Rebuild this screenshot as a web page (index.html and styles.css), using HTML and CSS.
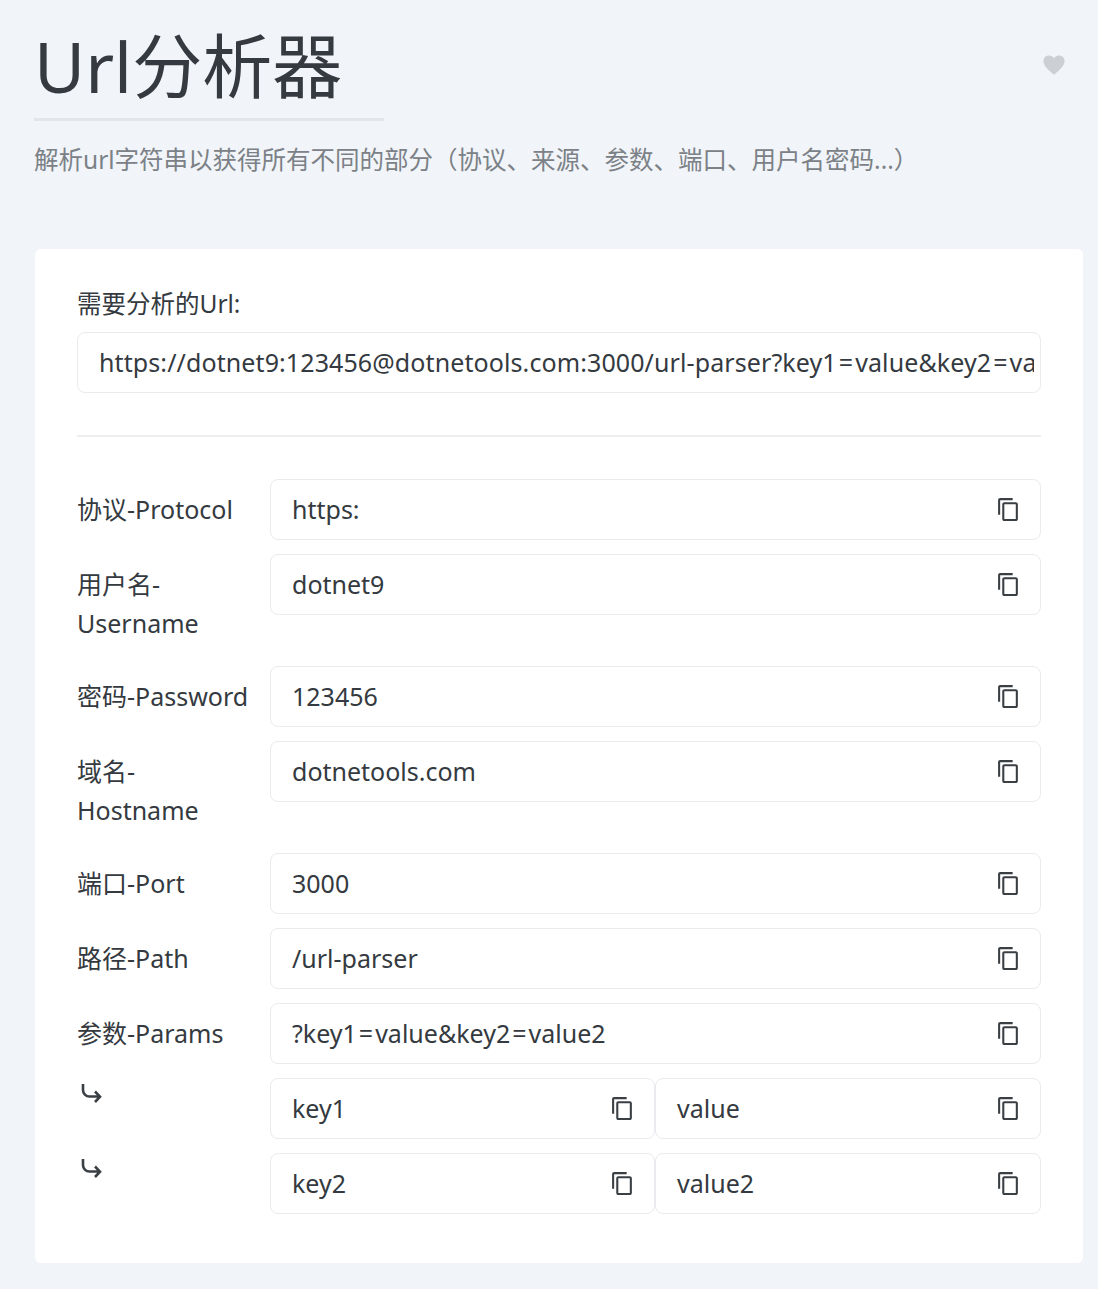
FILE: index.html
```html
<!DOCTYPE html>
<html lang="zh-CN">
<head>
    <meta charset="UTF-8">
    <title>Url分析器</title>
    <link rel="stylesheet" href="styles.css">
</head>
<body>
    <svg class="defs" width="0" height="0">
        <symbol id="copy" viewBox="0 0 24 24"><path d="M16 1H4c-1.1 0-2 .9-2 2v14h2V3h12V1zm3 4H8c-1.1 0-2 .9-2 2v14c0 1.1.9 2 2 2h11c1.1 0 2-.9 2-2V7c0-1.1-.9-2-2-2zm0 16H8V7h11v14z"/></symbol>
        <symbol id="arrow" viewBox="0 0 24 24"><path d="M3 3v6a6.500 6.500 0 0 0 6.500 6.500H20M15 10.500l5 5.200-5 5.300" fill="none" stroke="currentColor" stroke-width="2.600"/></symbol>
    </svg>
    <header class="head">
        <div class="head-top">
            <h1 class="title">Url分析器</h1>
            <svg class="heart" viewBox="0 0 24 24"><path d="M12 22.500C5 16.500.5 12.500.5 7.500.5 3.800 3.300 1.500 6.500 1.500c2.200 0 4.300 1.100 5.500 3 1.200-1.900 3.300-3 5.500-3 3.200 0 6 2.300 6 6 0 5-4.500 9-11.500 15z"/></svg>
        </div>
        <p class="desc">解析url字符串以获得所有不同的部分（协议、来源、参数、端口、用户名密码...）</p>
    </header>
    <main class="card">
        <div class="url-label">需要分析的Url:</div>
        <div class="url-box"><div class="url-text">https://dotnet9:123456@dotnetools.com:3000/url-parser?key1<span class="eq">=</span>value&amp;key2<span class="eq">=</span>value2</div></div>
        <hr class="line">
        <div class="row">
            <div class="name">协议-Protocol</div>
            <div class="fields"><div class="field"><span>https:</span><svg class="copy"><use href="#copy"/></svg></div></div>
        </div>
        <div class="row">
            <div class="name">用户名-Username</div>
            <div class="fields"><div class="field"><span>dotnet9</span><svg class="copy"><use href="#copy"/></svg></div></div>
        </div>
        <div class="row">
            <div class="name">密码-Password</div>
            <div class="fields"><div class="field"><span>123456</span><svg class="copy"><use href="#copy"/></svg></div></div>
        </div>
        <div class="row">
            <div class="name">域名-Hostname</div>
            <div class="fields"><div class="field"><span>dotnetools.com</span><svg class="copy"><use href="#copy"/></svg></div></div>
        </div>
        <div class="row">
            <div class="name">端口-Port</div>
            <div class="fields"><div class="field"><span>3000</span><svg class="copy"><use href="#copy"/></svg></div></div>
        </div>
        <div class="row">
            <div class="name">路径-Path</div>
            <div class="fields"><div class="field"><span>/url-parser</span><svg class="copy"><use href="#copy"/></svg></div></div>
        </div>
        <div class="row">
            <div class="name">参数-Params</div>
            <div class="fields"><div class="field"><span>?key1<span class="eq">=</span>value&amp;key2<span class="eq">=</span>value2</span><svg class="copy"><use href="#copy"/></svg></div></div>
        </div>
        <div class="row">
            <div class="name-icon"><svg class="arrow"><use href="#arrow"/></svg></div>
            <div class="fields">
                <div class="field key"><span>key1</span><svg class="copy"><use href="#copy"/></svg></div>
                <div class="field"><span>value</span><svg class="copy"><use href="#copy"/></svg></div>
            </div>
        </div>
        <div class="row">
            <div class="name-icon"><svg class="arrow"><use href="#arrow"/></svg></div>
            <div class="fields">
                <div class="field key"><span>key2</span><svg class="copy"><use href="#copy"/></svg></div>
                <div class="field"><span>value2</span><svg class="copy"><use href="#copy"/></svg></div>
            </div>
        </div>
    </main>
</body>
</html>
```

FILE: styles.css
```css
* {
    margin: 0;
    padding: 0;
    box-sizing: border-box;
}
body {
    font-family: "Noto Sans", "Noto Sans CJK SC", sans-serif;
    font-size: 25px;
    line-height: 39px;
    color: #343a40;
    background-color: #f1f4f9;
    padding: 0 15px 27px 34px;
}
.defs {
    display: block;
}
.head-top {
    display: flex;
    justify-content: space-between;
    align-items: flex-start;
}
.title {
    width: 350px;
    height: 121px;
    font-size: 70px;
    line-height: 100px;
    padding-top: 16px;
    font-weight: 400;
    border-bottom: 3px solid #e2e6ea;
}
.heart {
    width: 22px;
    height: 22px;
    margin: 54px 18px 0 0;
    fill: #ccd0d5;
}
.desc {
    margin-top: 19px;
    font-size: 24.5px;
    color: #7b8186;
}
.card {
    margin: 70px 0 0 1px;
    padding: 35px 42px 35px;
    background: #fff;
    border-radius: 6px;
}
.url-label {
    height: 48px;
    font-size: 24.5px;
}
.url-box {
    height: 61px;
    padding: 0 6px 0 21px;
    border: 1px solid #e9ebee;
    border-radius: 8px;
}
.url-text {
    height: 59px;
    line-height: 59px;
    white-space: nowrap;
    overflow: hidden;
    letter-spacing: 0.1px;
}
.eq {
    margin: 0 2px;
}
.line {
    margin: 42px 0;
    border: 0;
    border-top: 2px solid #eceef0;
}
.row {
    display: flex;
    margin-bottom: 14px;
}
.name {
    width: 193px;
    flex-shrink: 0;
    padding: 11px 20px 9px 0;
}
.name-icon {
    width: 193px;
    flex-shrink: 0;
    padding-top: 3px;
}
.arrow {
    display: block;
    width: 24px;
    height: 24px;
    margin-left: 3px;
    color: #3a3f44;
}
.fields {
    flex: 1;
    display: flex;
}
.field {
    flex: 1;
    display: flex;
    align-items: center;
    justify-content: space-between;
    height: 61px;
    padding: 0 19px 0 21px;
    border: 1px solid #e9ebee;
    border-radius: 8px;
}
.key {
    flex: 0 0 385px;
}
.copy {
    width: 25px;
    height: 25px;
    fill: #3a3f44;
}
```
